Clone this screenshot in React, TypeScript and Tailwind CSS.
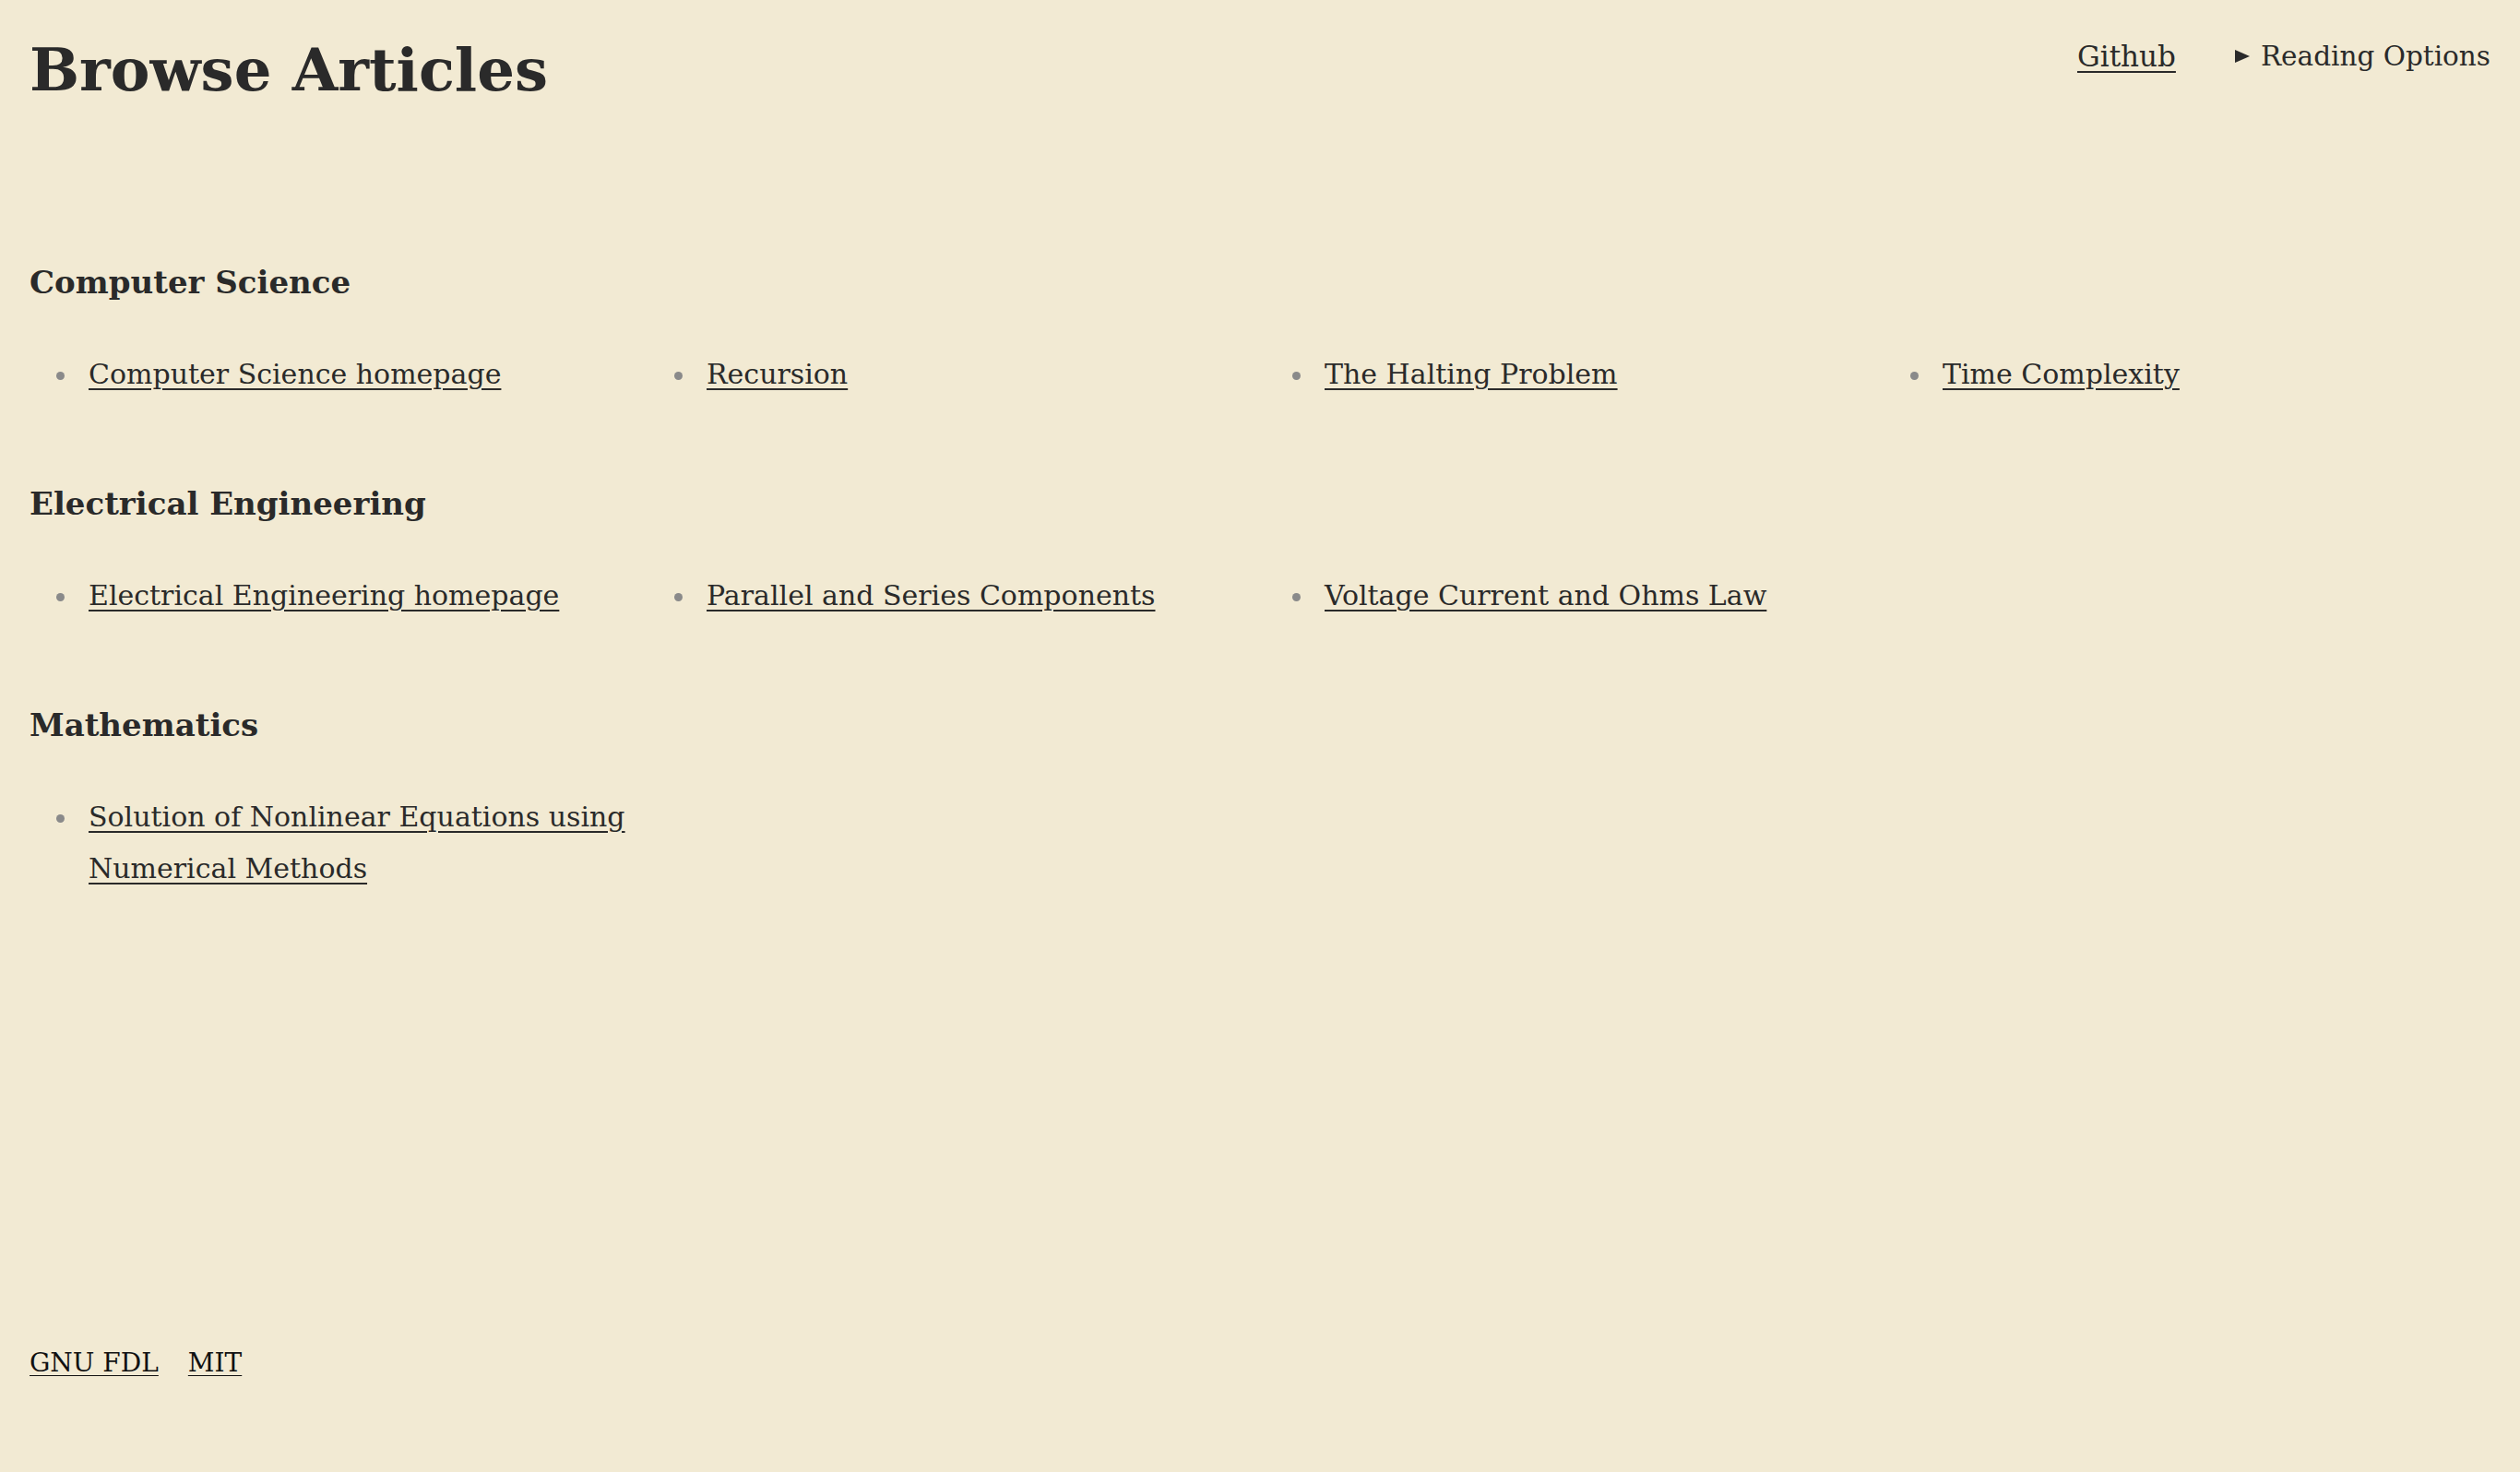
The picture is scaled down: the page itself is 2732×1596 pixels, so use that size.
const sections = [
  {
    title: 'Computer Science',
    links: ['Computer Science homepage', 'Recursion', 'The Halting Problem', 'Time Complexity']
  },
  {
    title: 'Electrical Engineering',
    links: ['Electrical Engineering homepage', 'Parallel and Series Components', 'Voltage Current and Ohms Law']
  },
  {
    title: 'Mathematics',
    links: ['Solution of Nonlinear Equations using Numerical Methods']
  }
];

export default function App() {
  return (
    <div className="min-h-screen flex flex-col bg-[#f2ead3] text-[#2a2a2a] font-['DejaVu_Serif',serif]">
      <header className="flex justify-between items-start px-8 pt-[38px]">
        <h1 className="text-[64px] leading-[1.2] font-bold">Browse Articles</h1>
        <nav className="flex items-center gap-[64px] leading-[1.5]">
          <a href="#" className="text-[31px] underline decoration-[2px] underline-offset-[5px]">Github</a>
          <div className="flex items-center gap-[12px] text-[29.5px]">
            <svg width="16" height="14" viewBox="0 0 16 14" className="fill-[#2a2a2a]">
              <path d="M0 0 L16 7 L0 14 Z" />
            </svg>
            <span>Reading Options</span>
          </div>
        </nav>
      </header>

      <main className="px-8 pt-[166px] flex flex-col gap-[87px]">
        {sections.map((section) => (
          <section key={section.title} className="flex flex-col gap-[46px]">
            <h2 className="text-[34px] leading-[1.5] font-bold">{section.title}</h2>
            <ul className="list-disc pl-[54px] grid grid-cols-4 gap-x-[66px] marker:text-[#8a8a8a]">
              {section.links.map((link) => (
                <li key={link} className="pl-[10px] text-[30px] leading-[56px]">
                  <a href="#" className="underline decoration-[2px] underline-offset-[5px]">{link}</a>
                </li>
              ))}
            </ul>
          </section>
        ))}
      </main>

      <footer className="mt-auto px-8 pb-[97px] flex gap-8 text-[28px] leading-[1.5] text-[#111]">
        <a href="#" className="underline decoration-[1px] underline-offset-[4px]">GNU FDL</a>
        <a href="#" className="underline decoration-[1px] underline-offset-[4px]">MIT</a>
      </footer>
    </div>
  );
}
